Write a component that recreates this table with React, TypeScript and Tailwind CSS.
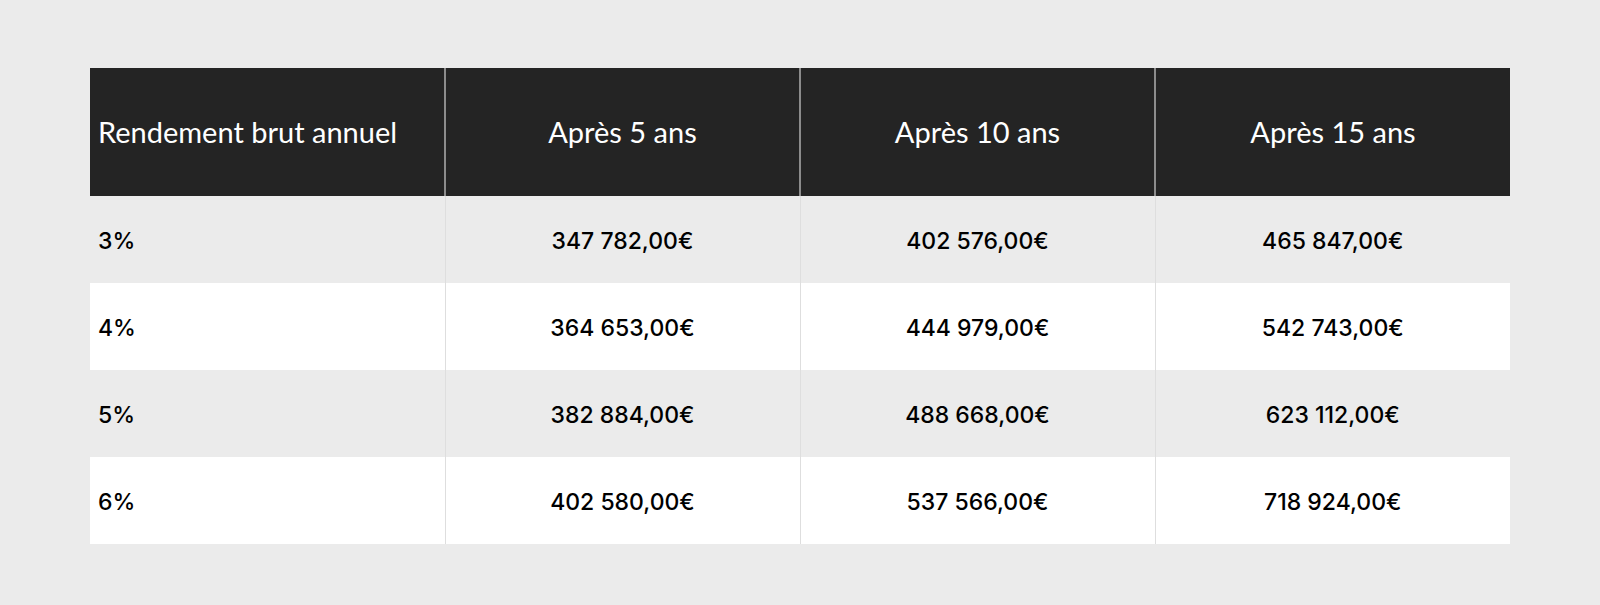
const headers = ["Rendement brut annuel", "Après 5 ans", "Après 10 ans", "Après 15 ans"];

const rows = [
  ["3%", "347 782,00€", "402 576,00€", "465 847,00€"],
  ["4%", "364 653,00€", "444 979,00€", "542 743,00€"],
  ["5%", "382 884,00€", "488 668,00€", "623 112,00€"],
  ["6%", "402 580,00€", "537 566,00€", "718 924,00€"],
];

export default function App() {
  return (
    <div className="min-h-[605px] w-full bg-[#ebebeb] pt-[68px] pl-[90px]">
      <table className="w-[1420px] table-fixed border-collapse">
        <thead>
          <tr className="h-[128px] bg-[#242424] text-white">
            {headers.map((h, i) => (
              <th
                key={h}
                className={`font-normal text-[29px] font-['Lato',sans-serif] ${
                  i === 0 ? "text-left pl-[8px]" : "text-center border-l-2 border-[#8c8c8c]"
                }`}
              >
                {h}
              </th>
            ))}
          </tr>
        </thead>
        <tbody>
          {rows.map((r, ri) => (
            <tr
              key={r[0]}
              className={`h-[87px] ${ri % 2 === 0 ? "bg-[#ebebeb]" : "bg-white"}`}
            >
              {r.map((c, i) => (
                <td
                  key={i}
                  className={`pt-[3px] text-[23px] font-medium text-black font-['Inter',sans-serif] ${
                    i === 0 ? "text-left pl-[8px]" : "text-center border-l border-[#dedede]"
                  }`}
                >
                  {c}
                </td>
              ))}
            </tr>
          ))}
        </tbody>
      </table>
    </div>
  );
}
